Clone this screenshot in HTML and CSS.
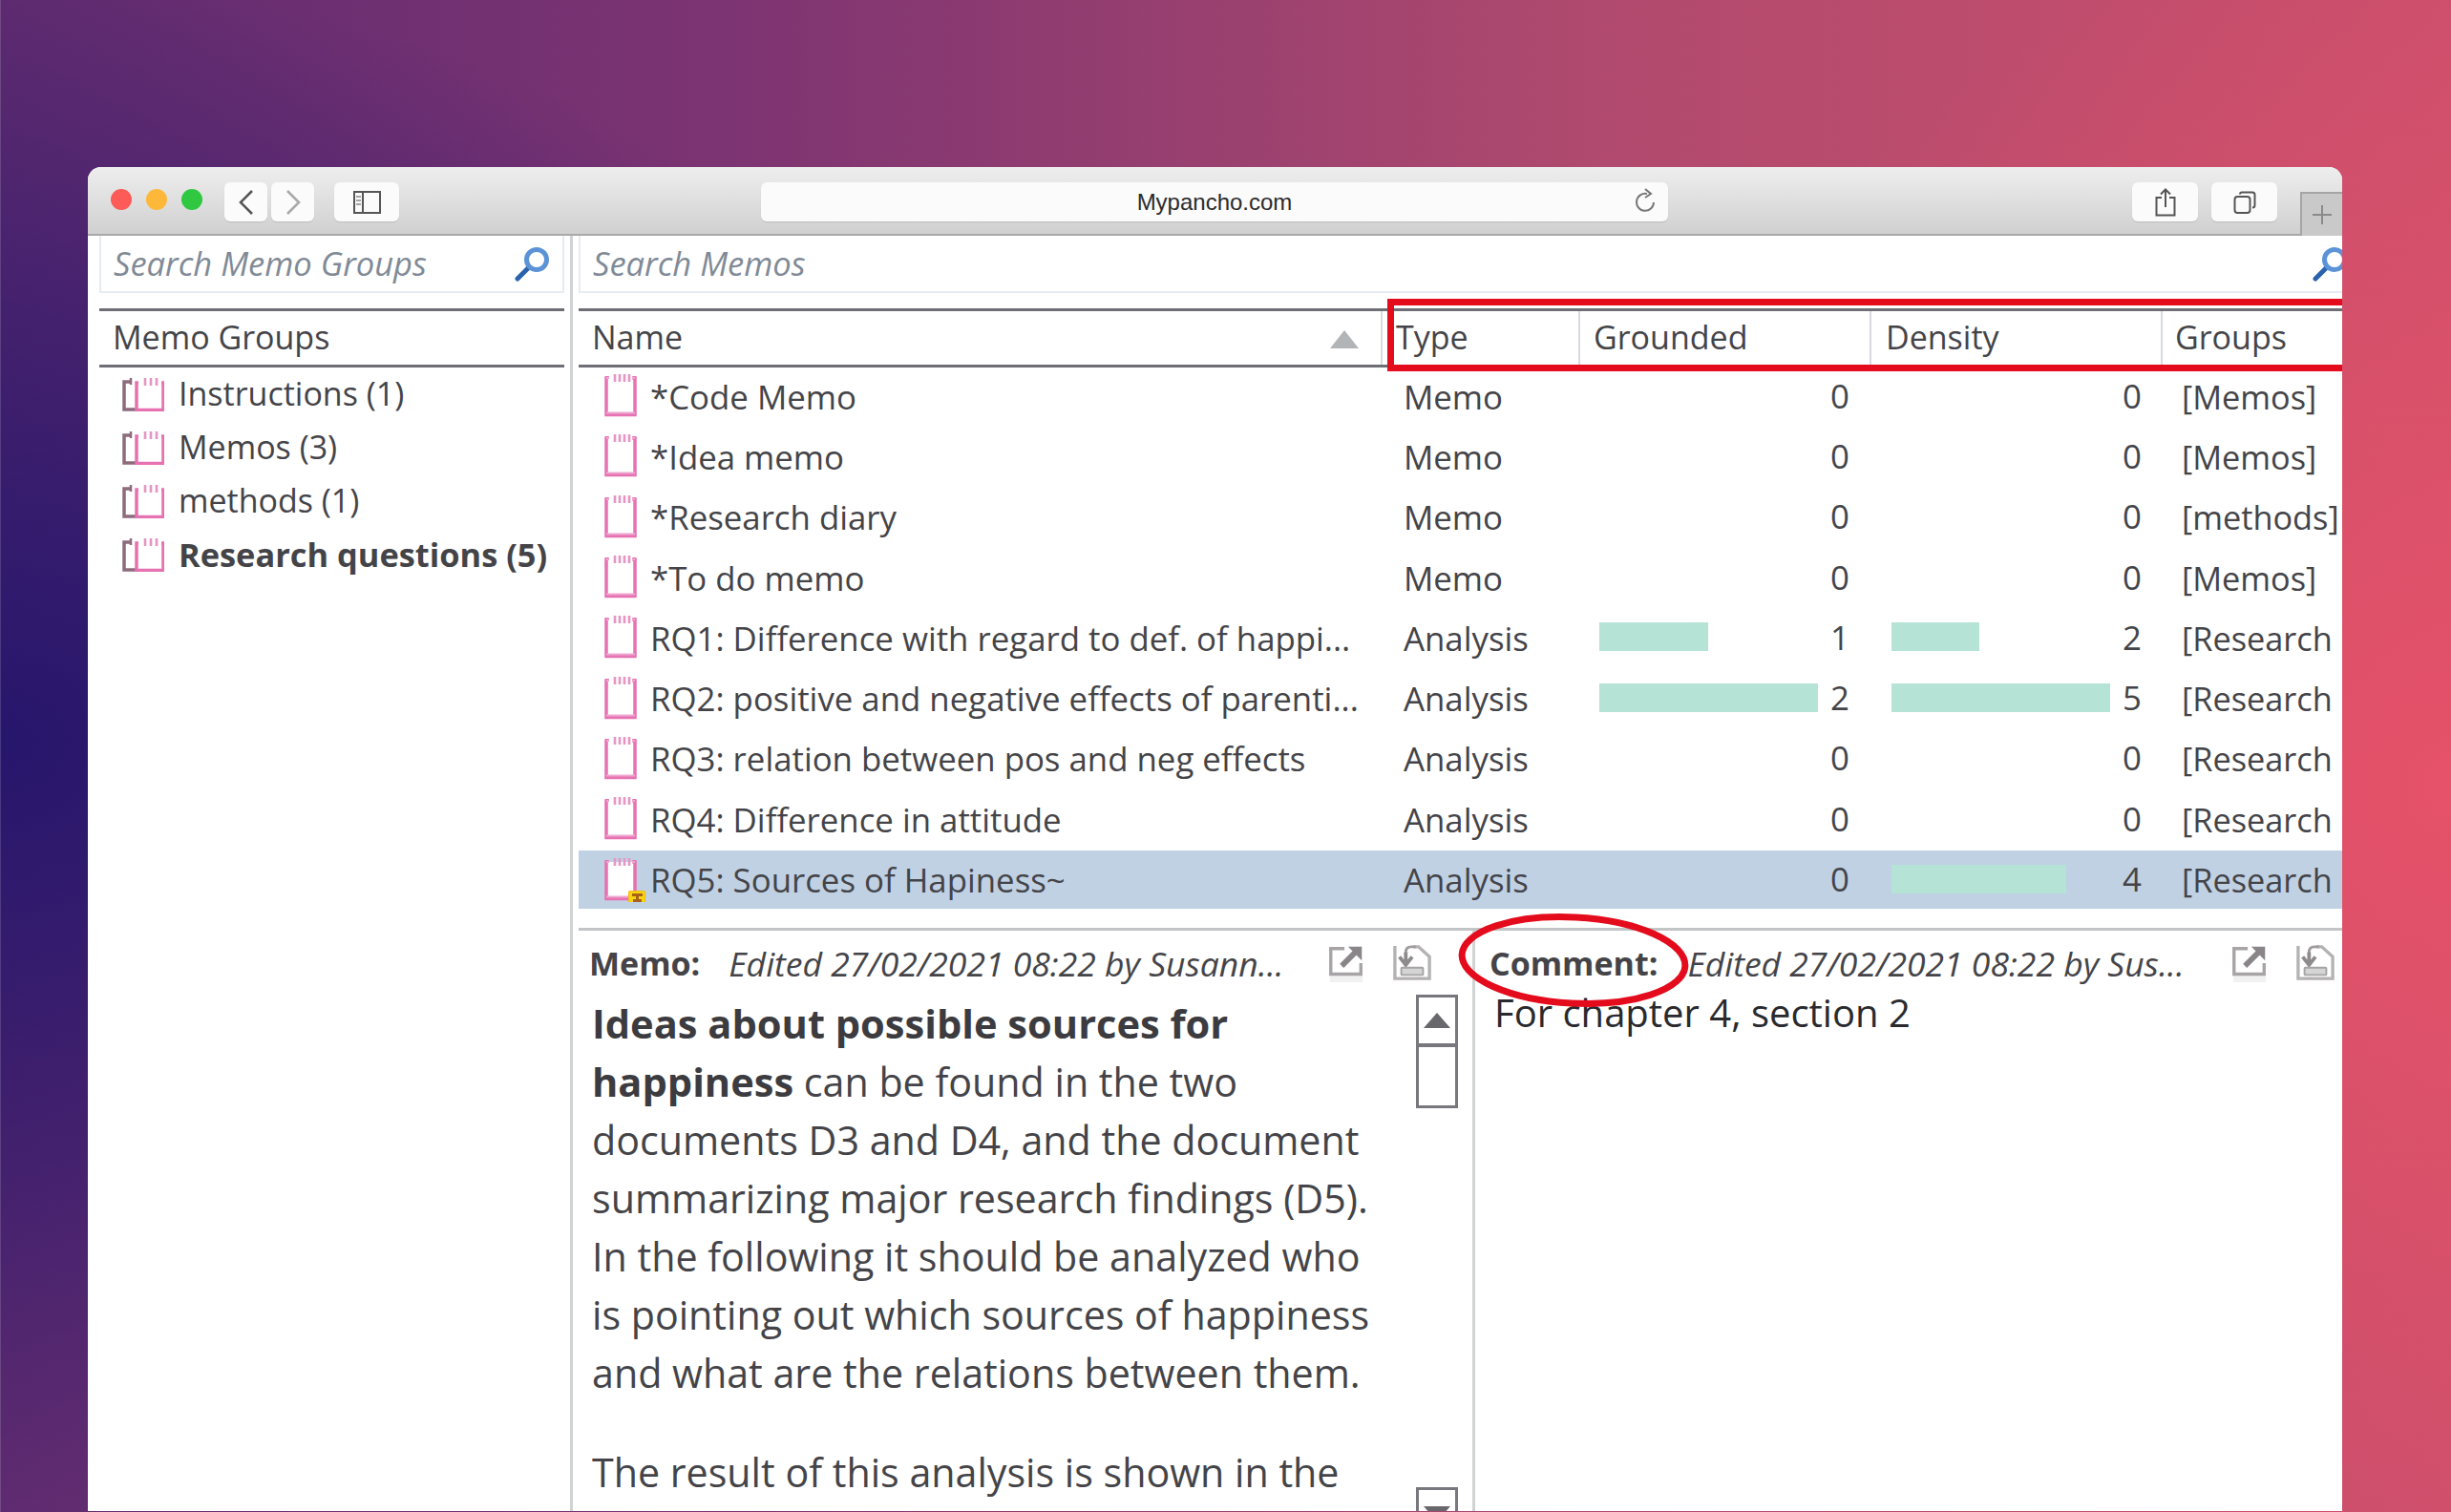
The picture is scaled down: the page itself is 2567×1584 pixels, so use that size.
FILE: index.html
```html
<!DOCTYPE html>
<html lang="en">
<head>
<meta charset="utf-8">
<title>Mypancho.com</title>
<link rel="stylesheet" href="styles.css">
</head>
<body>
<svg class="defs" width="0" height="0" aria-hidden="true">
  <symbol id="memo" viewBox="0 0 34 46">
    <path d="M3 5V3M3 5H2V43.500H32V5H31V3" fill="none" stroke="#e672b2" stroke-width="3.500"/>
    <path d="M2 5H5M29 5H32M2 41.500H32" fill="none" stroke="#f0a5d0" stroke-width="2"/>
    <path d="M11 1V9M16 1V9M21 1V9M26 1V9" stroke="#e795c4" stroke-width="2.600"/>
  </symbol>
  <symbol id="group" viewBox="0 0 44 36">
    <path d="M8 5H2V34H16" fill="none" stroke="#8d6b7c" stroke-width="3.500"/>
    <path d="M9 1V8" stroke="#8d6b7c" stroke-width="2.500"/>
    <path d="M17 6H15V34.500H43V6H41" fill="none" stroke="#e672b2" stroke-width="3.500"/>
    <path d="M24 1V9M30 1V9M36 1V9" stroke="#e595c2" stroke-width="2.600"/>
  </symbol>
  <symbol id="search" viewBox="0 0 37 37">
    <path d="M3 34L14 23" stroke="#2a62ad" stroke-width="5" stroke-linecap="round"/>
    <circle cx="23" cy="14" r="10.500" fill="#fff" stroke="#5b93d6" stroke-width="5"/>
  </symbol>
  <symbol id="export" viewBox="0 0 40 44">
    <rect x="2" y="34" width="36" height="9" fill="#f1f1f1"/>
    <path d="M18 6H3V34H36V22" fill="none" stroke="#a7a3a6" stroke-width="3.500"/>
    <path d="M15 25L32 8" fill="none" stroke="#8a8588" stroke-width="6"/>
    <path d="M22 4H37V19Z" fill="#8a8588"/>
  </symbol>
  <symbol id="save" viewBox="0 0 42 42">
    <path d="M2 2V38H40V14L28 3H22" fill="none" stroke="#b4b2b3" stroke-width="3.500"/>
    <path d="M25 3H20Q14 3 14 9V12" fill="none" stroke="#a09c9e" stroke-width="3"/>
    <path d="M14 9V22M7 14L14 23L21 14" fill="none" stroke="#8f8b8d" stroke-width="4"/>
    <rect x="9" y="26" width="24" height="8" rx="1" fill="#d6d5d5" stroke="#a5a3a4" stroke-width="2"/>
  </symbol>
</svg>
<div class="window">
  <header class="toolbar">
    <div class="lights"><i class="light red"></i><i class="light amber"></i><i class="light green"></i></div>
    <div class="nav">
      <button class="tbtn nav-btn"><svg width="18" height="30" viewBox="0 0 18 30"><path d="M15 3L3 15L15 27" fill="none" stroke="#555" stroke-width="2.600"/></svg></button>
      <button class="tbtn nav-btn"><svg width="18" height="30" viewBox="0 0 18 30"><path d="M3 3L15 15L3 27" fill="none" stroke="#aaa" stroke-width="2.600"/></svg></button>
    </div>
    <button class="tbtn side-btn"><svg width="29" height="24" viewBox="0 0 29 24"><rect x="1" y="1" width="27" height="22" fill="none" stroke="#555" stroke-width="2"/><path d="M10 1V23" stroke="#555" stroke-width="2"/><path d="M3 6H8M3 10H8M3 14H8" stroke="#888" stroke-width="1.600"/></svg></button>
    <div class="address"><span class="url">Mypancho.com</span>
      <svg class="reload" width="24" height="28" viewBox="0 0 24 28"><path d="M14 6A9 9 0 1 0 21 15" fill="none" stroke="#777" stroke-width="2"/><path d="M12 1L18 6L12 10" fill="none" stroke="#777" stroke-width="2"/></svg>
    </div>
    <button class="tbtn wide-btn share"><svg width="22" height="30" viewBox="0 0 22 30"><path d="M7 10H1.500V28.500H20.500V10H15" fill="none" stroke="#555" stroke-width="2"/><path d="M11 20V2M6 6.500L11 1.500L16 6.500" fill="none" stroke="#555" stroke-width="2"/></svg></button>
    <button class="tbtn wide-btn tabs"><svg width="24" height="24" viewBox="0 0 24 24"><rect x="1.500" y="6" width="16" height="17" rx="3" fill="none" stroke="#555" stroke-width="2"/><path d="M7 3.500Q7 1.500 9 1.500H20Q22.500 1.500 22.500 4V15Q22.500 17.500 20 17.500" fill="none" stroke="#555" stroke-width="2"/></svg></button>
    <div class="newtab"><svg width="22" height="22" viewBox="0 0 22 22"><path d="M11 1V21M1 11H21" stroke="#8a8a8a" stroke-width="2"/></svg></div>
  </header>
  <main class="content">
    <aside class="groups">
      <div class="searchbox"><span class="placeholder">Search Memo Groups</span><svg class="search-ic"><use href="#search"/></svg></div>
      <div class="grp-head">Memo Groups</div>
      <ul class="grp-list">
        <li class="grp-row"><svg class="grp-ic"><use href="#group"/></svg>Instructions (1)</li>
        <li class="grp-row"><svg class="grp-ic"><use href="#group"/></svg>Memos (3)</li>
        <li class="grp-row"><svg class="grp-ic"><use href="#group"/></svg>methods (1)</li>
        <li class="grp-row strong"><svg class="grp-ic"><use href="#group"/></svg>Research questions (5)</li>
      </ul>
    </aside>
    <section class="memos">
      <div class="searchbox wide"><span class="placeholder">Search Memos</span><svg class="search-ic"><use href="#search"/></svg></div>
      <div class="thead">
        <div class="th name-th"><span>Name</span><i class="sort"></i></div>
        <div class="th th-type">Type</div>
        <div class="th th-g">Grounded</div>
        <div class="th th-d">Density</div>
        <div class="th th-gr">Groups</div>
      </div>
      <div class="redbox"></div>
      <div class="rows">
        <div class="row"><div class="c-name"><svg class="memo-ic"><use href="#memo"/></svg>*Code Memo</div><div class="c-type">Memo</div><div class="c-num c-g"><span class="num">0</span></div><div class="c-num c-d"><span class="num">0</span></div><div class="c-gr">[Memos]</div></div>
        <div class="row"><div class="c-name"><svg class="memo-ic"><use href="#memo"/></svg>*Idea memo</div><div class="c-type">Memo</div><div class="c-num c-g"><span class="num">0</span></div><div class="c-num c-d"><span class="num">0</span></div><div class="c-gr">[Memos]</div></div>
        <div class="row"><div class="c-name"><svg class="memo-ic"><use href="#memo"/></svg>*Research diary</div><div class="c-type">Memo</div><div class="c-num c-g"><span class="num">0</span></div><div class="c-num c-d"><span class="num">0</span></div><div class="c-gr">[methods]</div></div>
        <div class="row"><div class="c-name"><svg class="memo-ic"><use href="#memo"/></svg>*To do memo</div><div class="c-type">Memo</div><div class="c-num c-g"><span class="num">0</span></div><div class="c-num c-d"><span class="num">0</span></div><div class="c-gr">[Memos]</div></div>
        <div class="row"><div class="c-name"><svg class="memo-ic"><use href="#memo"/></svg>RQ1: Difference with regard to def. of happi...</div><div class="c-type">Analysis</div><div class="c-num c-g"><i class="bar" style="width:114px"></i><span class="num">1</span></div><div class="c-num c-d"><i class="bar" style="width:92px"></i><span class="num">2</span></div><div class="c-gr">[Research questions]</div></div>
        <div class="row"><div class="c-name"><svg class="memo-ic"><use href="#memo"/></svg>RQ2: positive and negative effects of parenti...</div><div class="c-type">Analysis</div><div class="c-num c-g"><i class="bar" style="width:229px"></i><span class="num">2</span></div><div class="c-num c-d"><i class="bar" style="width:229px"></i><span class="num">5</span></div><div class="c-gr">[Research questions]</div></div>
        <div class="row"><div class="c-name"><svg class="memo-ic"><use href="#memo"/></svg>RQ3: relation between pos and neg effects</div><div class="c-type">Analysis</div><div class="c-num c-g"><span class="num">0</span></div><div class="c-num c-d"><span class="num">0</span></div><div class="c-gr">[Research questions]</div></div>
        <div class="row"><div class="c-name"><svg class="memo-ic"><use href="#memo"/></svg>RQ4: Difference in attitude</div><div class="c-type">Analysis</div><div class="c-num c-g"><span class="num">0</span></div><div class="c-num c-d"><span class="num">0</span></div><div class="c-gr">[Research questions]</div></div>
        <div class="row selected"><div class="c-name"><span class="ic-wrap"><svg class="memo-ic filled"><use href="#memo"/></svg><svg class="badge" viewBox="0 0 18 18"><rect x=".5" y="1.500" width="17" height="16" rx="1" fill="#f8d60f" stroke="#f2b90c"/><path d="M4 4H15V7H11V10H14V13H5V10H8V7H4Z" fill="#a9621a"/></svg></span>RQ5: Sources of Hapiness~</div><div class="c-type">Analysis</div><div class="c-num c-g"><span class="num">0</span></div><div class="c-num c-d"><i class="bar" style="width:183px"></i><span class="num">4</span></div><div class="c-gr">[Research questions]</div></div>
      </div>
      <div class="detail">
        <div class="memo-pane">
          <div class="pane-head">
            <b class="pane-label">Memo:</b>
            <em class="pane-meta memo-meta">Edited 27/02/2021 08:22 by Susann...</em>
            <svg class="act-ic first"><use href="#export"/></svg>
            <svg class="act-ic"><use href="#save"/></svg>
          </div>
          <div class="memo-body">
            <div class="memo-text">
              <p><b>Ideas about possible sources for<br>happiness</b> can be found in the two<br>documents D3 and D4, and the document<br>summarizing major research findings (D5).<br>In the following it should be analyzed who<br>is pointing out which sources of happiness<br>and what are the relations between them.</p>
              <p>The result of this analysis is shown in the</p>
            </div>
            <div class="scrollbar">
              <div class="sb-btn"><i class="tri up"></i></div>
              <div class="sb-thumb"></div>
              <div class="sb-btn down"><i class="tri dn"></i></div>
            </div>
          </div>
        </div>
        <div class="comment-pane">
          <div class="pane-head">
            <b class="pane-label">Comment:</b>
            <em class="pane-meta comment-meta">Edited 27/02/2021 08:22 by Sus...</em>
            <svg class="act-ic first"><use href="#export"/></svg>
            <svg class="act-ic"><use href="#save"/></svg>
          </div>
          <p class="comment-text">For chapter 4, section 2</p>
        </div>
        <svg class="ring" width="244" height="100" viewBox="0 0 244 100"><ellipse cx="122" cy="50" rx="117" ry="45" fill="none" stroke="#e30b1c" stroke-width="7" transform="rotate(3 122 50)"/></svg>
      </div>
    </section>
  </main>
</div>
</body>
</html>
```

FILE: styles.css
```css
* { box-sizing: border-box; }
html, body { margin: 0; height: 100%; }
body {
  width: 2567px;
  height: 1584px;
  overflow: hidden;
  padding: 175px 114px 1px 92px;
  font-family: "Open Sans", "Liberation Sans", sans-serif;
  color: #444448;
  box-shadow: inset 1px 0 0 rgba(255,255,255,.15);
  background:
    radial-gradient(ellipse 1100px 800px at 0% 49%, #26166c 0%, rgba(38,22,108,.55) 50%, rgba(38,22,108,0) 100%),
    radial-gradient(ellipse 900px 900px at 100% 52%, rgba(232,82,104,.9) 0%, rgba(232,82,104,0) 100%),
    linear-gradient(90deg, #5f2b70 0%, #7d3472 30%, #b04a6e 65%, #cc4f6c 100%);
}
.defs { position: absolute; }
.window {
  height: 1408px;
  background: #fff;
  border-radius: 14px 14px 0 0;
  overflow: hidden;
  display: flex;
  flex-direction: column;
}

/* toolbar */
.toolbar {
  height: 72px;
  flex: none;
  display: flex;
  align-items: flex-start;
  padding: 16px 0 0 24px;
  background: linear-gradient(#eeeeee, #d0d0d0);
  border-bottom: 2px solid #a9a9a9;
}
.lights { display: flex; gap: 15px; margin-top: 7px; }
.light { width: 22px; height: 22px; border-radius: 50%; display: block; }
.red { background: #fc5b57; }
.amber { background: #fdb83a; }
.green { background: #2fc840; }
.tbtn {
  height: 41px;
  padding: 0;
  border: 0;
  border-radius: 6px;
  background: #fbfbfb;
  box-shadow: 0 1px 1px rgba(0,0,0,.12);
  display: flex;
  align-items: center;
  justify-content: center;
}
.nav { display: flex; gap: 4px; margin-left: 23px; }
.nav-btn { width: 45px; }
.side-btn { width: 68px; margin-left: 21px; }
.address {
  width: 950px;
  height: 41px;
  margin-left: 379px;
  background: #fbfbfb;
  border-radius: 6px;
  box-shadow: 0 1px 1px rgba(0,0,0,.12);
  display: flex;
  align-items: center;
  position: relative;
  justify-content: center;
}
.url { font: 24px "Liberation Sans", sans-serif; color: #2b2b2b; }
.reload { position: absolute; right: 12px; top: 6px; }
.wide-btn { width: 69px; }
.share { margin-left: 486px; }
.tabs { margin-left: 14px; }
.newtab {
  width: 44px;
  height: 46px;
  margin: 10px 0 0 24px;
  background: #c9c9c9;
  border: 1px solid #a5a5a5;
  border-width: 2px 0 0 2px;
  display: flex;
  align-items: center;
  justify-content: center;
}

/* content */
.content { flex: 1; display: flex; min-height: 0; }
.groups {
  width: 508px;
  flex: none;
  padding: 0 6px 0 12px;
  border-right: 3px solid #d0d3d3;
}
.searchbox {
  height: 60px;
  border: 2px solid #e6ebf2;
  border-top: 0;
  display: flex;
  align-items: center;
  justify-content: space-between;
  padding: 0 13px 0 13px;
}
.placeholder { font-size: 34.5px; font-style: italic; color: #808a96; position: relative; top: -1px; }
.search-ic { width: 37px; height: 37px; flex: none; }
.grp-head {
  height: 62px;
  margin-top: 16px;
  border: solid #6e6e76;
  border-width: 3px 0;
  font-size: 34px;
  line-height: 54px;
  padding-left: 14px;
}
.grp-list { list-style: none; margin: 0; padding: 0; }
.grp-row {
  height: 56px;
  display: flex;
  align-items: center;
  font-size: 34px;
  padding: 0 0 2px 24px;
}
.strong { font-weight: 700; font-size: 34.4px; }
.grp-ic { width: 44px; height: 36px; margin-right: 15px; flex: none; position: relative; top: 1px; }

.memos { flex: 1; min-width: 0; margin-left: 6px; position: relative; display: flex; flex-direction: column; }
.searchbox.wide { width: 1860px; padding-right: 5px; }
.thead {
  margin-top: 16px;
  height: 62px;
  display: grid;
  grid-template-columns: 847px 200px 305px 305px 190px;
  border-top: 3px solid #6e6e76;
  border-bottom: 3px solid #6e6e76;
}
.th { font-size: 34px; line-height: 54px; white-space: nowrap; }
.name-th { padding-left: 14px; margin-right: 5px; border-right: 2px solid #d9dadf; position: relative; }
.th-type { padding-left: 9px; }
.th-g { padding-left: 14px; border-left: 2px solid #d9dadf; }
.th-d { padding-left: 15px; border-left: 2px solid #d9dadf; }
.th-gr { padding-left: 13px; border-left: 2px solid #d9dadf; }
.sort {
  position: absolute;
  right: 23px;
  top: 20px;
  border: solid transparent;
  border-width: 0 15px 19px;
  border-bottom-color: #b2b5b8;
}
.redbox {
  position: absolute;
  left: 847px;
  top: 66px;
  width: 1100px;
  height: 76px;
  border: 7px solid #e30b1c;
  pointer-events: none;
}
.row {
  height: 63.3px;
  padding-bottom: 3px;
  display: grid;
  grid-template-columns: 847px 200px 305px 305px 190px;
  align-items: center;
  font-size: 34.8px;
  white-space: nowrap;
}
.selected { background: #c0d1e4; background-clip: content-box; }
.c-name { display: flex; align-items: center; padding-left: 27px; overflow: hidden; }
.memo-ic { width: 34px; height: 46px; margin-right: 14px; flex: none; position: relative; top: -1px; }
.filled { background: linear-gradient(#fff, #fff) 2px 5px / 30px 38px no-repeat; }
.ic-wrap { position: relative; display: flex; }
.badge { position: absolute; left: 25px; top: 33px; width: 18px; height: 18px; }
.c-type { padding-left: 17px; }
.c-num { display: flex; align-items: center; justify-content: space-between; }
.c-g { padding: 0 21px 0 22px; }
.c-d { padding: 0 20px 0 23px; }
.num { margin-left: auto; position: relative; top: -1px; }
.bar { height: 30px; background: #b5e3d6; display: block; flex: none; position: relative; top: -1px; }
.c-gr { padding-left: 22px; overflow: hidden; font-size: 34.3px; }

/* detail panes */
.detail {
  flex: 1;
  margin-top: 17px;
  border-top: 3px solid #c2c4c6;
  display: flex;
  min-height: 0;
  position: relative;
}
.memo-pane { width: 936px; flex: none; }
.comment-pane { flex: 1; min-width: 0; border-left: 3px solid #d0d3d3; }
.pane-head { height: 70px; display: flex; align-items: center; padding-left: 11px; white-space: nowrap; position: relative; }
.pane-label { font-size: 34px; font-weight: 700; position: relative; top: -1px; }
.pane-meta { font-size: 35.5px; position: relative; top: -1px; }
.memo-meta { margin-left: 30px; width: 627px; overflow: hidden; }
.comment-meta { margin-left: 31px; width: 569px; overflow: hidden; }
.comment-pane .pane-head { padding-left: 15px; }
.act-ic { width: 40px; height: 42px; flex: none; margin-left: 29px; position: relative; top: -1px; }
.first { margin-left: 0; }
.memo-body { display: flex; align-items: flex-start; }
.memo-text { width: 877px; margin-top: -3px; padding-left: 14px; font-size: 41.2px; line-height: 61px; white-space: nowrap; }
.memo-text p { margin: 0 0 43px; }
.memo-text b { color: #3c3c40; font-size: 1.01em; }
.scrollbar { width: 44px; margin-top: -3px; display: flex; flex-direction: column; }
.sb-btn { height: 52px; border: 3px solid #77777d; border-bottom-width: 1px; display: flex; align-items: center; justify-content: center; flex: none; }
.sb-thumb { height: 67px; border: 3px solid #77777d; flex: none; }
.down { margin-top: 397px; height: 60px; align-items: flex-start; padding-top: 17px; border-bottom: 0; }
.tri { display: block; border: solid transparent; }
.up { border-width: 0 14px 16px; border-bottom-color: #68686c; }
.dn { border-width: 16px 14px 0; border-top-color: #68686c; }
.comment-text { margin: -9px 0 0 20px; font-size: 40px; color: #2a2a2e; line-height: 50px; }
.ring { position: absolute; left: 920px; top: -19px; }
```
